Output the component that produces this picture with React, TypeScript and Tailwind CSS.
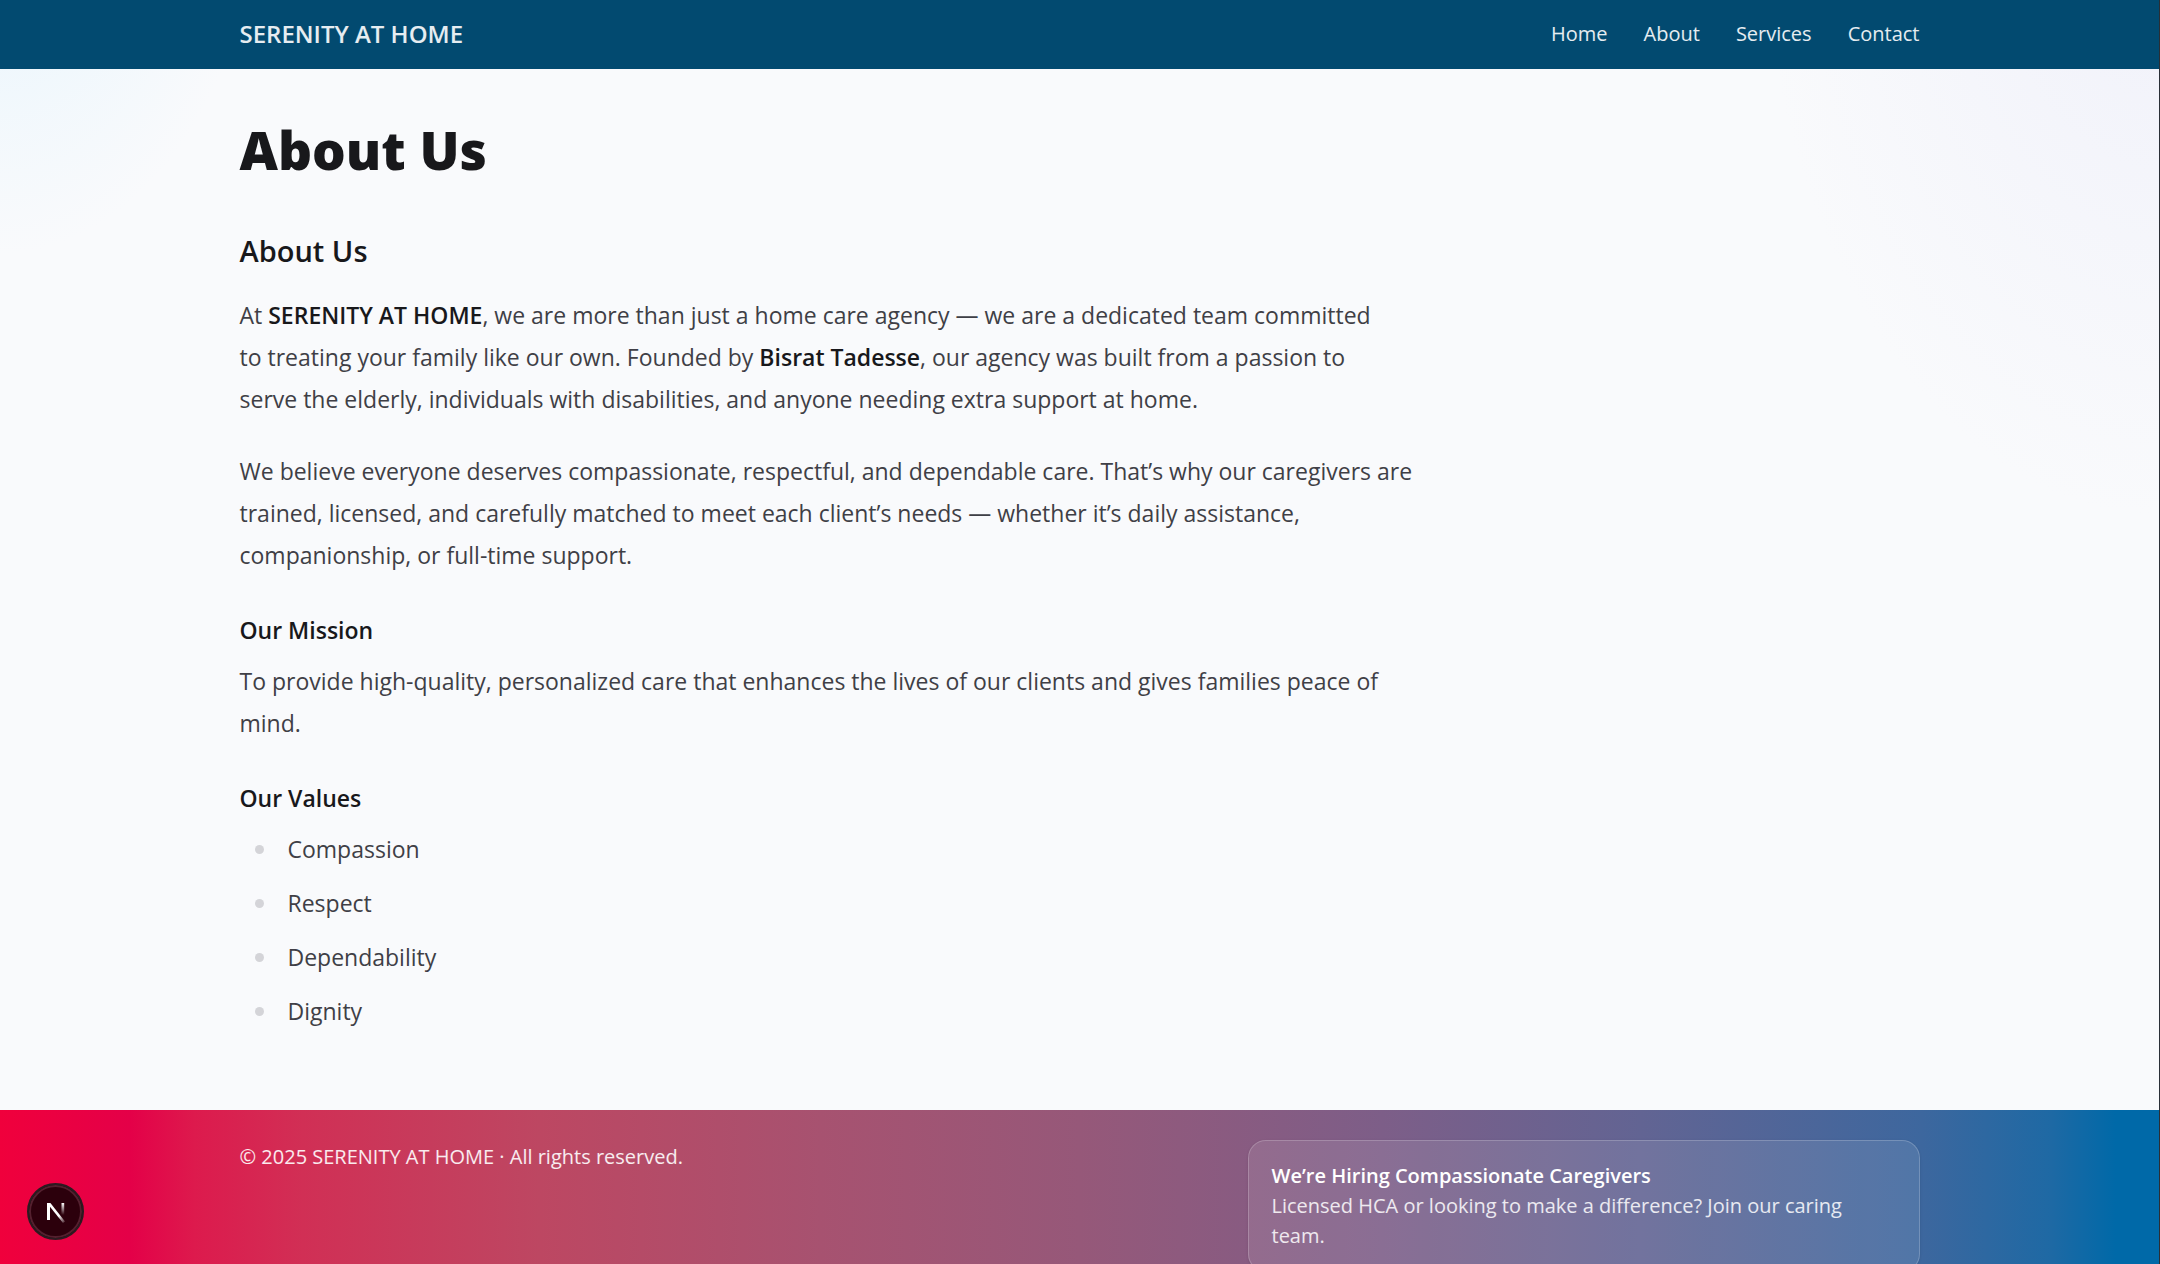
const navLinks = ["Home", "About", "Services", "Contact"];
const values = ["Compassion", "Respect", "Dependability", "Dignity"];

function Header() {
  return (
    <header className="bg-[#024a70]">
      <div className="mx-auto flex h-[68px] max-w-[1728px] items-center justify-between px-6">
        <a href="#" className="text-[24px] leading-9 font-semibold text-white/90">SERENITY AT HOME</a>
        <nav aria-label="Main" className="flex gap-9 text-[20px] leading-[30px] text-white/90">
          {navLinks.map((label) => (
            <a key={label} href="#">{label}</a>
          ))}
        </nav>
      </div>
      <div className="h-px" />
    </header>
  );
}

function Article() {
  return (
    <main className="mx-auto w-full max-w-[1728px] px-6 pt-12 pb-[78px]">
      <h1 className="text-[53px] leading-[66px] font-extrabold text-[#18181b]">About Us</h1>
      <div className="mt-12 max-w-[1180px] text-[23px] leading-[42px] text-[#3f3f46]">
        <h2 className="text-[29px] leading-10 font-semibold text-[#18181b]">About Us</h2>
        <p className="mt-[23px]">
          At <strong className="font-semibold text-[#18181b]">SERENITY AT HOME</strong>, we are more than just a home
          care agency — we are a dedicated team committed
          <br />
          to treating your family like our own. Founded by{" "}
          <strong className="font-semibold text-[#18181b]">Bisrat Tadesse</strong>, our agency was built from a
          passion to
          <br />
          serve the elderly, individuals with disabilities, and anyone needing extra support at home.
        </p>
        <p className="mt-[30px]">
          We believe everyone deserves compassionate, respectful, and dependable care. That’s why our caregivers are
          trained, licensed, and carefully matched to meet each client’s needs — whether it’s daily assistance,
          companionship, or full-time support.
        </p>
        <h3 className="mt-9 leading-9 font-semibold text-[#18181b]">Our Mission</h3>
        <p className="mt-3">
          To provide high-quality, personalized care that enhances the lives of our clients and gives families peace
          of mind.
        </p>
        <h3 className="mt-9 leading-9 font-semibold text-[#18181b]">Our Values</h3>
        <ul className="mt-3 flex flex-col gap-3">
          {values.map((value) => (
            <li key={value} className="flex items-center pl-[15px]">
              <span className="mr-6 size-[9px] rounded-full bg-[#d4d4d8]" />
              {value}
            </li>
          ))}
        </ul>
      </div>
    </main>
  );
}

function Footer() {
  return (
    <footer className="bg-[linear-gradient(to_right,#f0003c_0%,#e40048_6%,#dd1a4d_9%,#d12f55_14%,#bd4762_25%,#a75270_38%,#965879_50%,#7d5e88_64%,#626493_76%,#3d679e_89%,#1e69a4_95%,#0069a8_98%)]">
      <div className="mx-auto flex max-w-[1728px] items-start justify-between px-6 py-[30px] text-[20px] leading-[30px] text-white/90">
        <p className="leading-[34px]">© 2025 SERENITY AT HOME · All rights reserved.</p>
        <section className="w-2/5 rounded-[18px] border border-white/20 bg-white/10 px-[23px] py-5 shadow-sm">
          <h2 className="font-semibold text-white">We’re Hiring Compassionate Caregivers</h2>
          <p className="text-white/85">Licensed HCA or looking to make a difference? Join our caring team.</p>
        </section>
      </div>
    </footer>
  );
}

function DevToolsBadge() {
  return (
    <button
      type="button"
      aria-label="Open developer tools"
      className="fixed bottom-6 left-[27px] flex size-[57px] items-center justify-center rounded-full border-2 border-[#2b1a20] bg-[#2c000c] shadow-[inset_0_0_0_2px_#54202f]"
    >
      <svg viewBox="0 0 20 22" className="h-[22px] w-5" aria-hidden="true">
        <defs>
          <linearGradient id="stem" x1="0" y1="0" x2="0" y2="1">
            <stop offset="0" stopColor="#fff" />
            <stop offset="1" stopColor="#fff" stopOpacity="0" />
          </linearGradient>
          <linearGradient id="slash" x1="0" y1="0" x2="1" y2="1">
            <stop offset="0.65" stopColor="#fff" />
            <stop offset="1" stopColor="#fff" stopOpacity="0.1" />
          </linearGradient>
        </defs>
        <path d="M1 2h3v17H1z" fill="#fff" />
        <path d="M1 2h3.4L19 20.4 17 22z" fill="url(#slash)" />
        <path d="M15.5 2h2.7v12h-2.7z" fill="url(#stem)" />
      </svg>
    </button>
  );
}

export default function App() {
  return (
    <div className="min-h-screen border-r border-[#2a2f36] bg-[#f9fafc] bg-[radial-gradient(260px_380px_at_0%_-126px,#e6f5fd,transparent),radial-gradient(400px_620px_at_100%_-105px,#f0f1fa,transparent)] font-['Open_Sans',sans-serif]">
      <Header />
      <Article />
      <Footer />
      <DevToolsBadge />
    </div>
  );
}
